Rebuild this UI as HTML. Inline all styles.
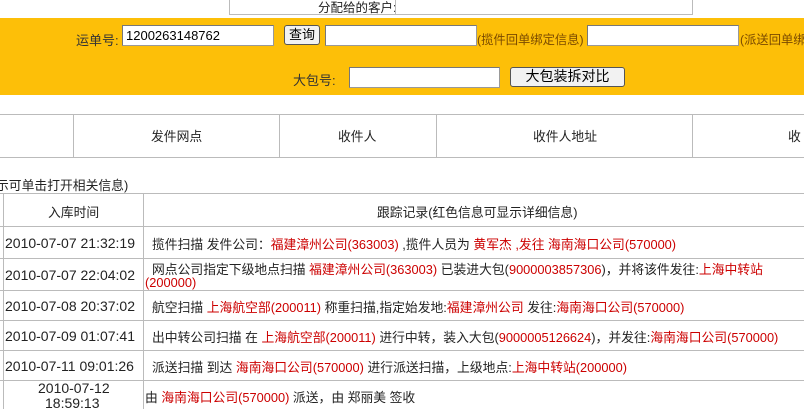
<!DOCTYPE html>
<html><head><meta charset="utf-8"><style>
body{margin:0;width:804px;height:409px;overflow:hidden;background:#fff;font-family:"Liberation Sans","Noto Sans CJK SC",sans-serif;font-size:12px;color:#222;position:relative}
.a{position:absolute;white-space:nowrap}
.t{font-size:12.8px}
.d{font-size:14px}
.inp{position:absolute;background:#fff;border:1px solid #999;border-top-color:#777;border-left-color:#777;box-sizing:border-box}
.btn{position:absolute;background:#f2f2f2;border:1px solid #555;border-radius:3px;box-sizing:border-box;text-align:center;font-size:13px;color:#000}
.r{color:#c00}
.hl{position:absolute;background:#bbb;height:1px}
.vl{position:absolute;background:#bbb;width:1px}
</style></head><body>
<div class="a" style="left:229px;top:-1px;width:462px;height:14px;border:1px solid #bbb"></div>
<div class="a" style="left:318px;top:-3px;font-size:12.5px">分配给的客户:</div>
<div class="vl" style="left:395px;top:0;height:14px"></div>
<div class="a" style="left:0;top:18px;width:804px;height:77px;background:#fdbf08"></div>
<div class="a" style="left:76px;top:30px;color:#333;font-size:13px">运单号:</div>
<div class="inp" style="left:122px;top:25px;width:152px;height:21px;padding:2px 3px;font-size:13px;color:#000">1200263148762</div>
<div class="btn" style="left:284px;top:25px;width:36px;height:20px;line-height:17px">查询</div>
<div class="inp" style="left:325px;top:25px;width:152px;height:21px"></div>
<div class="a" style="left:477px;top:30px;color:#7a4a00;font-size:12.3px">(揽件回单绑定信息)</div>
<div class="inp" style="left:587px;top:25px;width:152px;height:21px"></div>
<div class="a" style="left:740px;top:30px;color:#7a4a00;font-size:12.3px">(派送回单绑</div>
<div class="a" style="left:293px;top:70px;color:#333;font-size:13px">大包号:</div>
<div class="inp" style="left:349px;top:67px;width:151px;height:21px"></div>
<div class="btn" style="left:510px;top:67px;width:115px;height:20px;line-height:17px;font-size:14px">大包装拆对比</div>
<div class="hl" style="left:0;top:114px;width:804px"></div>
<div class="hl" style="left:0;top:157px;width:804px"></div>
<div class="vl" style="left:73px;top:114px;height:44px"></div>
<div class="vl" style="left:279px;top:114px;height:44px"></div>
<div class="vl" style="left:436px;top:114px;height:44px"></div>
<div class="vl" style="left:692px;top:114px;height:44px"></div>
<div class="a t" style="left:151px;top:126px">发件网点</div>
<div class="a t" style="left:338px;top:126px">收件人</div>
<div class="a t" style="left:533px;top:126px">收件人地址</div>
<div class="a t" style="left:788px;top:126px">收</div>
<div class="a t" style="left:-4px;top:175px">示可单击打开相关信息)</div>
<div class="hl" style="left:0;top:193px;width:804px"></div>
<div class="hl" style="left:0;top:226px;width:804px"></div>
<div class="hl" style="left:0;top:258px;width:804px"></div>
<div class="hl" style="left:0;top:290px;width:804px"></div>
<div class="hl" style="left:0;top:320px;width:804px"></div>
<div class="hl" style="left:0;top:350px;width:804px"></div>
<div class="hl" style="left:0;top:380px;width:804px"></div>
<div class="vl" style="left:3px;top:193px;height:216px"></div>
<div class="vl" style="left:143px;top:193px;height:216px"></div>
<div class="a t" style="left:48px;top:202px">入库时间</div>
<div class="a t" style="left:377px;top:202px">跟踪记录(红色信息可显示详细信息)</div>
<div class="a d" style="left:5px;top:235px">2010-07-07 21:32:19</div>
<div class="a t" style="left:152px;top:234px">揽件扫描 发件公司：<span class="r">福建漳州公司(363003)</span> ,揽件人员为 <span class="r">黄军杰 ,发往 海南海口公司(570000)</span></div>
<div class="a d" style="left:5px;top:267px">2010-07-07 22:04:02</div>
<div class="a t" style="left:152px;top:259px"> 网点公司指定下级地点扫描 <span class="r">福建漳州公司(363003)</span> 已装进大包(<span class="r">9000003857306</span>)，并将该件发往:<span class="r">上海中转站</span></div>
<div class="a t r" style="left:145px;top:275px">(200000)</div>
<div class="a d" style="left:5px;top:298px">2010-07-08 20:37:02</div>
<div class="a t" style="left:152px;top:297px">航空扫描 <span class="r">上海航空部(200011)</span> 称重扫描,指定始发地:<span class="r">福建漳州公司</span> 发往:<span class="r">海南海口公司(570000)</span></div>
<div class="a d" style="left:5px;top:328px">2010-07-09 01:07:41</div>
<div class="a t" style="left:152px;top:327px">出中转公司扫描 在 <span class="r">上海航空部(200011)</span> 进行中转，装入大包(<span class="r">9000005126624</span>)，并发往:<span class="r">海南海口公司(570000)</span></div>
<div class="a d" style="left:5px;top:358px">2010-07-11 09:01:26</div>
<div class="a t" style="left:152px;top:357px">派送扫描 到达 <span class="r">海南海口公司(570000)</span> 进行派送扫描，上级地点:<span class="r">上海中转站(200000)</span></div>
<div class="a d" style="left:38px;top:380px">2010-07-12</div>
<div class="a d" style="left:45px;top:395px">18:59:13</div>
<div class="a t" style="left:145px;top:387px">由 <span class="r">海南海口公司(570000)</span> 派送，由 郑丽美 签收</div>
</body></html>
